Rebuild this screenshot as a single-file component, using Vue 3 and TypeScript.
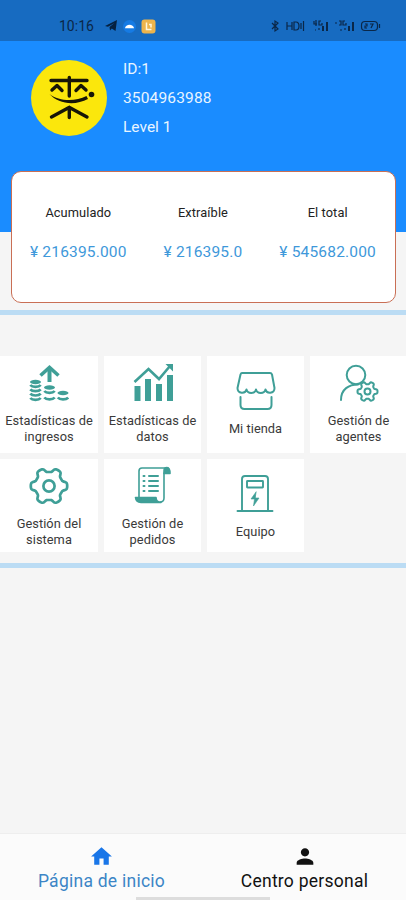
<script setup lang="ts">
type IconName = 'income' | 'chart' | 'shop' | 'agent' | 'gear' | 'orders' | 'device'

interface Tile {
  icon: IconName
  lines: string[]
}

interface Balance {
  label: string
  value: string
}

const balances: Balance[] = [
  { label: 'Acumulado', value: '¥ 216395.000' },
  { label: 'Extraíble', value: '¥ 216395.0' },
  { label: 'El total', value: '¥ 545682.000' },
]

const tiles: Tile[] = [
  { icon: 'income', lines: ['Estadísticas de', 'ingresos'] },
  { icon: 'chart', lines: ['Estadísticas de', 'datos'] },
  { icon: 'shop', lines: ['Mi tienda'] },
  { icon: 'agent', lines: ['Gestión de', 'agentes'] },
  { icon: 'gear', lines: ['Gestión del', 'sistema'] },
  { icon: 'orders', lines: ['Gestión de', 'pedidos'] },
  { icon: 'device', lines: ['Equipo'] },
]

// Smooth outline of a six-toothed cog around (cx, cy).
function cog(cx: number, cy: number, outer: number, inner: number): string {
  const points: string[] = []
  for (let deg = 0; deg < 360; deg += 3) {
    const wave = Math.tanh(2.2 * Math.cos((deg * 6 * Math.PI) / 180)) / Math.tanh(2.2)
    const r = (outer + inner) / 2 + (wave * (outer - inner)) / 2
    const a = (deg * Math.PI) / 180
    points.push(`${(cx + r * Math.cos(a)).toFixed(2)} ${(cy + r * Math.sin(a)).toFixed(2)}`)
  }
  return `M${points.join('L')}Z`
}

const bigCog = cog(20, 20, 18.2, 14)
const smallCog = cog(28.5, 27.5, 10, 7.2)
</script>

<template>
  <div class="screen">
    <div class="status">
      <div class="status-left">
        <span class="clock">10:16</span>
        <svg width="12" height="12" viewBox="0 0 12 12"><path d="M0 6 12 0 10.500 11 6.800 8.500 5 10.500 4.500 7 9.500 3 3 6.800Z" fill="#06213f" /></svg>
        <svg class="cloud" width="13" height="13" viewBox="0 0 13 13"><circle cx="6.500" cy="6.500" r="6.500" fill="#167be4" /><path d="M2 8.300C2.400 3.500 10.600 3.500 11 8.300Z" fill="#fff" /></svg>
        <svg class="badge" width="15" height="15" viewBox="0 0 15 15"><rect x=".5" y=".5" width="14" height="14" rx="3" fill="#edb44d" /><path d="M5.500 3.500v7h5M8 5.500h2v3" fill="none" stroke="#fff6dd" stroke-width="1.500" /></svg>
      </div>
      <svg class="status-right" width="112" height="14" viewBox="0 0 112 14" fill="none" stroke="#0a2748" stroke-width="1.200">
        <path d="M1 4 7 10 4 12V2L7 4 1 10" />
        <path d="M16 3v8M21 3v8M16 7h5M23 3v8h2c4 0 4-8 0-8ZM30 4v6M32.500 2v10" />
        <path d="M43 2v3h3M45 1v6M50 2h-2v4h3V4M44 11h1M48 11V9" />
        <path d="M52 12V7M56 12V3" stroke-width="2" />
        <path d="M64 4h2M68 2h2v4h-2M74 2h-2v4h3V4M69 11h2M74 11V9" />
        <path d="M78 12V7M82 12V3" stroke-width="2" />
        <rect x="90.500" y="2.500" width="16" height="9" rx="3.500" />
        <path d="M94 5h2v2h-2v2h2M99 5h3l-2 4M108.500 5v4" />
      </svg>
    </div>

    <header class="profile">
      <svg class="avatar" width="76" height="76" viewBox="0 0 76 76">
        <circle cx="38" cy="38" r="38" fill="#fbe70c" />
        <g fill="none" stroke="#171607" stroke-width="3.400" stroke-linecap="round" stroke-linejoin="round">
          <path d="M20 20.500H56M38.300 17.500V36M21 30l5-4.500 5 5M45 30.500l5-5 5 4.500M38.300 47.500V57.500M38 47.500 20.500 57M38.500 47.500 56 57" />
        </g>
        <path d="M18.500 34C28 41.500 44 42 55.500 36L57 39C44 46 27 44 18.500 34Z" fill="#171607" />
        <circle cx="60.500" cy="34.500" r="2.800" fill="#171607" />
      </svg>
      <div class="identity">
        <span>ID:1</span>
        <span class="phone">3504963988</span>
        <span>Level 1</span>
      </div>
    </header>

    <section class="card">
      <div v-for="b in balances" :key="b.label" class="balance">
        <span class="balance-label">{{ b.label }}</span>
        <span class="balance-value">{{ b.value }}</span>
      </div>
    </section>

    <div class="rule"></div>

    <main class="grid">
      <div v-for="t in tiles" :key="t.icon" class="tile" :class="{ single: t.lines.length === 1 }">
        <svg class="icon" width="40" height="40" viewBox="0 0 40 40" fill="none" stroke="#3f9f97" stroke-width="2" stroke-linecap="round" stroke-linejoin="round">
          <g v-if="t.icon === 'income'" stroke-linecap="butt">
            <path d="M20.500 18V4" stroke-width="4" />
            <path d="M11.500 11.500 20.500 3.500 29.500 11.500" stroke-width="3.600" stroke-linejoin="miter" />
            <ellipse cx="6.500" cy="18" rx="5.500" ry="2.200" fill="#3f9f97" stroke="none" />
            <ellipse cx="20.500" cy="23.500" rx="5.500" ry="2.200" fill="#3f9f97" stroke="none" />
            <ellipse cx="34" cy="29" rx="5.500" ry="2.200" fill="#3f9f97" stroke="none" />
            <path d="M1.300 21c2 2.500 8.400 2.500 10.400 0M1.300 25.300c2 2.500 8.400 2.500 10.400 0M1.300 29.600c2 2.500 8.400 2.500 10.400 0M1.300 34c2 2.500 8.400 2.500 10.400 0M15.300 27c2 2.500 8.400 2.500 10.400 0M15.300 33.500c2 2.500 8.400 2.500 10.400 0M28.800 33.500c2 2.500 8.400 2.500 10.400 0" stroke-width="2.700" />
          </g>
          <g v-else-if="t.icon === 'chart'" stroke-linecap="butt" stroke-linejoin="miter">
            <path d="M4.500 37V22M15 37V15M26 37V20M37 37V11" stroke-width="6" />
            <path d="M1.500 18 15.500 5 26 15 37 2" stroke-width="2.600" />
            <path d="M32.500 0H40V7.500Z" fill="#3f9f97" stroke="none" />
          </g>
          <g v-else-if="t.icon === 'shop'">
            <path d="M6 2H34Q35.500 2 36 3.500L38.500 17C38.500 23 30.500 23 29.500 18.500 28.500 23 21 23 20 18.500 19 23 11.500 23 10.500 18.500 9.500 23 1.500 23 1.500 17L4.500 3.500Q5 2 6 2Z" />
            <path d="M4.500 26V34Q4.500 38 8.500 38H31.500Q35.500 38 35.500 34V26" />
          </g>
          <g v-else-if="t.icon === 'agent'">
            <circle cx="17" cy="11" r="9.300" />
            <path d="M2 36C2 25 10 20.500 19 20.500" />
            <path :d="smallCog" />
            <circle cx="28.500" cy="27.500" r="3" />
          </g>
          <g v-else-if="t.icon === 'gear'" stroke-width="2.700">
            <path :d="bigCog" />
            <circle cx="20" cy="20" r="5.600" />
          </g>
          <g v-else-if="t.icon === 'orders'" stroke-width="1.600">
            <path d="M6 32V5Q6 2 9 2H35M31 7V32Q31 36 27 36" />
            <path d="M31 7.500V5Q31 1.500 34 1.500 37 1.500 37 7.500Z" fill="#3f9f97" />
            <path d="M2.500 31.500H23Q23 36 28 36.500H8Q3 36.500 2.500 31.500Z" fill="#3f9f97" />
            <path d="M10.500 10h1M10.500 15h1M10.500 20h1M10.500 25h1M16 10H25M16 15H25M16 20H25M16 25H25" stroke-width="2" />
          </g>
          <g v-else stroke-width="1.900">
            <path d="M1.500 37H36.500M6 37V5Q6 2 9 2H29Q32 2 32 5V37" />
            <rect x="11" y="7" width="16" height="6.500" rx=".5" />
            <path d="M20 18 15 25H18.500L17.500 32 23 24H19.500Z" fill="#3f9f97" stroke-width=".6" />
          </g>
        </svg>
        <span v-for="line in t.lines" :key="line" class="line">{{ line }}</span>
      </div>
    </main>

    <div class="rule"></div>

    <nav class="tabs">
      <div class="tab active">
        <svg width="25" height="25" viewBox="0 0 24 24"><path d="M10 20v-6h4v6h5v-8h3L12 3 2 12h3v8z" fill="currentColor" /></svg>
        <span>Página de inicio</span>
      </div>
      <div class="tab">
        <svg width="28" height="28" viewBox="0 0 24 24"><path d="M12 12c2.210 0 4-1.790 4-4s-1.790-4-4-4-4 1.790-4 4 1.790 4 4 4zm0 2c-2.670 0-8 1.340-8 4v2h16v-2c0-2.660-5.330-4-8-4z" fill="currentColor" /></svg>
        <span>Centro personal</span>
      </div>
      <i class="handle"></i>
    </nav>
  </div>
</template>

<style>
body {
  margin: 0;
  background: #f5f5f5;
}
</style>

<style scoped>
.screen {
  display: flex;
  flex-direction: column;
  width: 406px;
  height: 900px;
  overflow: hidden;
  background: #f5f5f5;
  color: #222;
  font-family: Roboto, sans-serif;
}
.status {
  display: flex;
  flex: none;
  justify-content: space-between;
  height: 41px;
  padding: 12px 23px 0 59px;
  box-sizing: border-box;
  background: #176bc1;
}
.status-left {
  display: flex;
  align-items: center;
  height: 28px;
}
.clock {
  width: 46px;
  color: #0b2748;
  font-size: 14px;
}
.cloud {
  margin-left: 6px;
}
.badge {
  margin-left: 5px;
}
.status-right {
  margin-top: 7px;
}
.profile {
  display: flex;
  flex: none;
  height: 191px;
  padding: 19px 0 0 31px;
  box-sizing: border-box;
  background: #1a8cff;
}
.identity {
  display: flex;
  flex-direction: column;
  margin: -5px 0 0 16px;
  color: #e9f5ff;
  font-size: 15.500px;
  line-height: 29px;
}
.phone {
  letter-spacing: 0.15px;
}
.card {
  display: flex;
  flex: none;
  position: relative;
  justify-content: space-between;
  width: 385px;
  height: 132px;
  margin: -61px 0 7px 11px;
  padding: 31px 19px 0 18px;
  box-sizing: border-box;
  border: 1px solid #c96f55;
  border-radius: 10px;
  background: #fff;
}
.balance {
  display: flex;
  flex-direction: column;
  align-items: center;
}
.balance-label {
  font-size: 12.800px;
  line-height: 20px;
  letter-spacing: 0.1px;
}
.balance-value {
  margin-top: 17px;
  color: #3e98da;
  font-size: 15.500px;
  line-height: 24px;
  letter-spacing: 0.18px;
  white-space: nowrap;
}
.rule {
  flex: none;
  height: 5px;
  background: #bbdcf4;
}
.grid {
  display: grid;
  flex: none;
  grid-template-columns: 98px 97px 97px 97px;
  grid-template-rows: 97px 93px;
  gap: 6px;
  margin: 41px 0 11px;
}
.tile {
  display: flex;
  flex-direction: column;
  align-items: center;
  padding-top: 8px;
  box-sizing: border-box;
  background: #fff;
}
.tile:nth-child(n + 5) {
  padding-top: 7px;
}
.tile.single {
  padding-top: 15px;
}
.icon {
  flex: none;
  margin-bottom: 9px;
}
.tile:nth-child(n + 5) .icon {
  margin-bottom: 10px;
}
.single .icon {
  margin-bottom: 10px;
}
.line {
  color: #3a3a3a;
  font-size: 12.800px;
  line-height: 15.500px;
  letter-spacing: 0.05px;
  white-space: nowrap;
}
.tabs {
  display: flex;
  position: relative;
  height: 67px;
  margin-top: auto;
  box-sizing: border-box;
  border-top: 1px solid #eee;
  background: #fbfbfb;
}
.tab {
  display: flex;
  flex: 1;
  flex-direction: column;
  align-items: center;
  padding-top: 10px;
  color: #111;
  font-size: 17.500px;
  line-height: 24px;
  letter-spacing: 0.25px;
}
.tab svg {
  height: 25px;
}
.active {
  color: #1976e8;
}
.active span {
  color: #3c85c6;
}
.handle {
  position: absolute;
  bottom: 0;
  left: 136px;
  width: 134px;
  height: 3px;
  background: #ddd;
}
</style>
